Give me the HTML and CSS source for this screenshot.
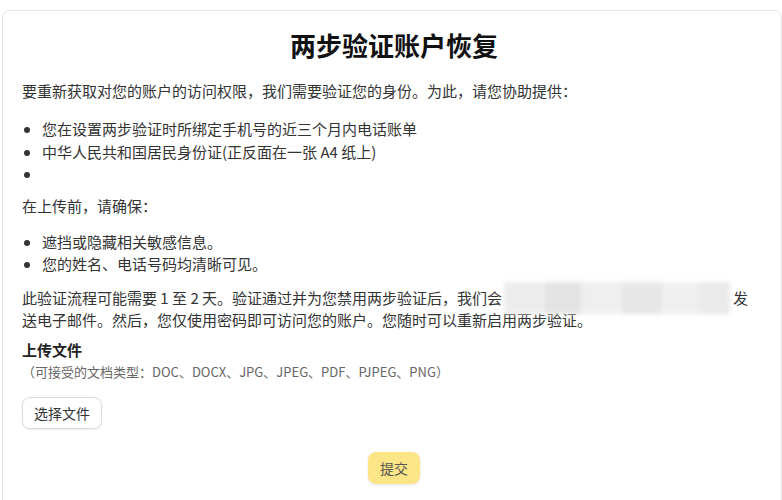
FILE: index.html
```html
<!DOCTYPE html>
<html lang="zh-CN">
  <head>
    <meta charset="UTF-8" />
    <meta name="viewport" content="width=device-width, initial-scale=1.0" />
    <title>两步验证账户恢复</title>
    <link rel="stylesheet" href="styles.css">
  </head>
  <body>
    <div class="card">
      <h1 class="title">两步验证账户恢复</h1>
      <p class="text intro">要重新获取对您的账户的访问权限，我们需要验证您的身份。为此，请您协助提供：</p>
      <ul class="list">
        <li>您在设置两步验证时所绑定手机号的近三个月内电话账单</li>
        <li>中华人民共和国居民身份证(正反面在一张 A4 纸上)</li>
        <li></li>
      </ul>
      <p class="text before">在上传前，请确保：</p>
      <ul class="list">
        <li>遮挡或隐藏相关敏感信息。</li>
        <li>您的姓名、电话号码均清晰可见。</li>
      </ul>
      <p class="text notice">此验证流程可能需要 1 至 2 天。验证通过并为您禁用两步验证后，我们会<span class="hidden"></span>发送电子邮件。然后，您仅使用密码即可访问您的账户。您随时可以重新启用两步验证。</p>
      <div class="upload">
        <div class="upload-title">上传文件</div>
        <div class="upload-types">（可接受的文档类型：DOC、DOCX、JPG、JPEG、PDF、PJPEG、PNG）</div>
        <button class="file-btn">选择文件</button>
      </div>
      <div class="actions">
        <button class="submit-btn">提交</button>
      </div>
    </div>
  </body>
</html>
```

FILE: styles.css
```css
html,
body {
  height: 100%;
  overflow: hidden;
}
body {
  margin: 0;
  padding: 10px 0 0 2px;
  box-sizing: border-box;
  font-family: "Noto Sans CJK SC", "Noto Sans", sans-serif;
  color: #333;
  background: #fff;
}
.card {
  border: 1px solid #e4e4e4;
  border-radius: 8px;
  padding: 17px 20px 30px 19px;
  height: 500px;
  box-sizing: border-box;
}
.title {
  margin: 0 0 18px;
  padding-left: 5px;
  text-align: center;
  font-size: 26px;
  line-height: 34px;
  font-weight: bold;
  color: #111;
}
.text {
  margin: 0;
  font-size: 15px;
  line-height: 22px;
}
.intro {
  margin-bottom: 16px;
}
.before {
  margin-top: 9px;
  margin-bottom: 14px;
}
.notice {
  margin-top: 11px;
  margin-bottom: 8px;
}
.list {
  margin: 0;
  padding-left: 20px;
  font-size: 15px;
  line-height: 22.5px;
}
.list li {
  min-height: 22.5px;
}
.hidden {
  display: inline-block;
  position: relative;
  width: 231px;
  height: 1em;
}
.hidden::after {
  content: "";
  position: absolute;
  left: 2px;
  top: -7px;
  width: 226px;
  height: 32px;
  background:
    linear-gradient(90deg, #ececec 0 18%, #e2e2e2 18% 34%, #efefef 34% 52%, #e6e6e6 52% 70%, #f0f0f0 70% 86%, #e9e9e9 86% 100%);
  filter: blur(2px);
  opacity: 0.95;
}
.upload-title {
  font-size: 15px;
  font-weight: bold;
  line-height: 22px;
  color: #222;
}
.upload-types {
  font-size: 13px;
  line-height: 22px;
  color: #666;
}
.file-btn {
  margin-top: 14px;
  width: 80px;
  height: 32px;
  font-family: inherit;
  font-size: 14px;
  color: #333;
  background: #fff;
  border: 1px solid #dcdcdc;
  border-radius: 8px;
  box-shadow: 0 1px 2px rgba(0, 0, 0, 0.08);
}
.actions {
  display: flex;
  justify-content: center;
  margin-top: 23px;
  padding-left: 5px;
}
.submit-btn {
  width: 52px;
  height: 32px;
  font-family: inherit;
  font-size: 14px;
  color: #555;
  background: #fce587;
  border: none;
  border-radius: 8px;
  box-shadow: 0 1px 3px rgba(0, 0, 0, 0.1);
}
```
